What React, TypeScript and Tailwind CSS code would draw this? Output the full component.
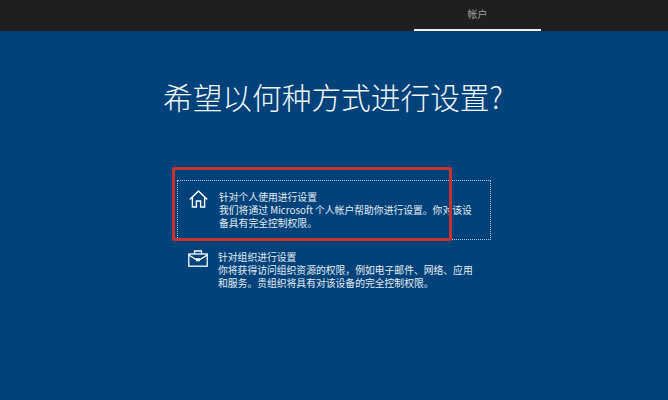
import React from 'react';

const font = { fontFamily: '"Noto Sans CJK SC", "Liberation Sans", sans-serif' };

const HomeIcon = () => (
  <svg width="19" height="18" viewBox="0 0 19 18" fill="none" stroke="#ffffff" strokeWidth="1.4">
    <path d="M0.8 9.6 L9.5 1 L18.2 9.6" />
    <path d="M3.4 7.4 V17 H7.4 V11 H11.6 V17 H15.6 V7.4" />
  </svg>
);

const CaseIcon = () => (
  <svg width="20" height="17" viewBox="0 0 20 17" fill="none" stroke="#ffffff" strokeWidth="1.3">
    <path d="M6.5 4 V1 H13.5 V4" />
    <rect x="0.8" y="4" width="18.4" height="12.2" />
    <path d="M0.8 5 L8 9.6 H12 L19.2 5" />
    <rect x="8.4" y="8.6" width="3.2" height="2.4" fill="#ffffff" strokeWidth="0.6" />
  </svg>
);

export default function App() {
  return (
    <div className="relative w-[668px] h-[400px] overflow-hidden bg-[#01427a] text-white flex flex-col" style={font}>
      {/* Top bar */}
      <div className="h-[31px] shrink-0 bg-[#1f1f1f] flex justify-end pr-[127px]">
        <div className="w-[127px] h-full flex items-center justify-center border-b-2 border-[#f2f2f2] pb-[2px]">
          <span className="text-[10px] leading-none text-[#a0a0a0]">帐户</span>
        </div>
      </div>

      <h1 className="mt-[46px] ml-[163px] text-[29.7px] leading-[40px] font-light text-[#f4f7fa] whitespace-nowrap">希望以何种方式进行设置?</h1>

      <div className="mt-[63px] ml-[177px] w-[314px] flex flex-col">
        {/* Selected option */}
        <div className="h-[60px] border border-dotted border-[#b9c8d6] flex pl-[11px] pt-[8px]">
          <div className="w-[30px] shrink-0 pt-[1px]"><HomeIcon /></div>
          <div className="text-[9.8px] leading-[13px] text-[#e8eef4] pt-[1.5px] pr-[14px]">
            <div>针对个人使用进行设置</div>
            <div>我们将通过 Microsoft 个人帐户帮助你进行设置。你对该设备具有完全控制权限。</div>
          </div>
        </div>
        {/* Other option */}
        <div className="flex pl-[11px] pt-[10px]">
          <div className="w-[30px] shrink-0"><CaseIcon /></div>
          <div className="text-[9.8px] leading-[13px] text-[#e8eef4] pt-[1px] pr-[14px]">
            <div>针对组织进行设置</div>
            <div>你将获得访问组织资源的权限，例如电子邮件、网络、应用和服务。贵组织将具有对该设备的完全控制权限。</div>
          </div>
        </div>
      </div>

      {/* Red annotation drawn over the screenshot */}
      <div className="absolute left-[172px] top-[167px] w-[280px] h-[74px] border-[3px] border-[#c8322f] rounded-[2px]" />
    </div>
  );
}
